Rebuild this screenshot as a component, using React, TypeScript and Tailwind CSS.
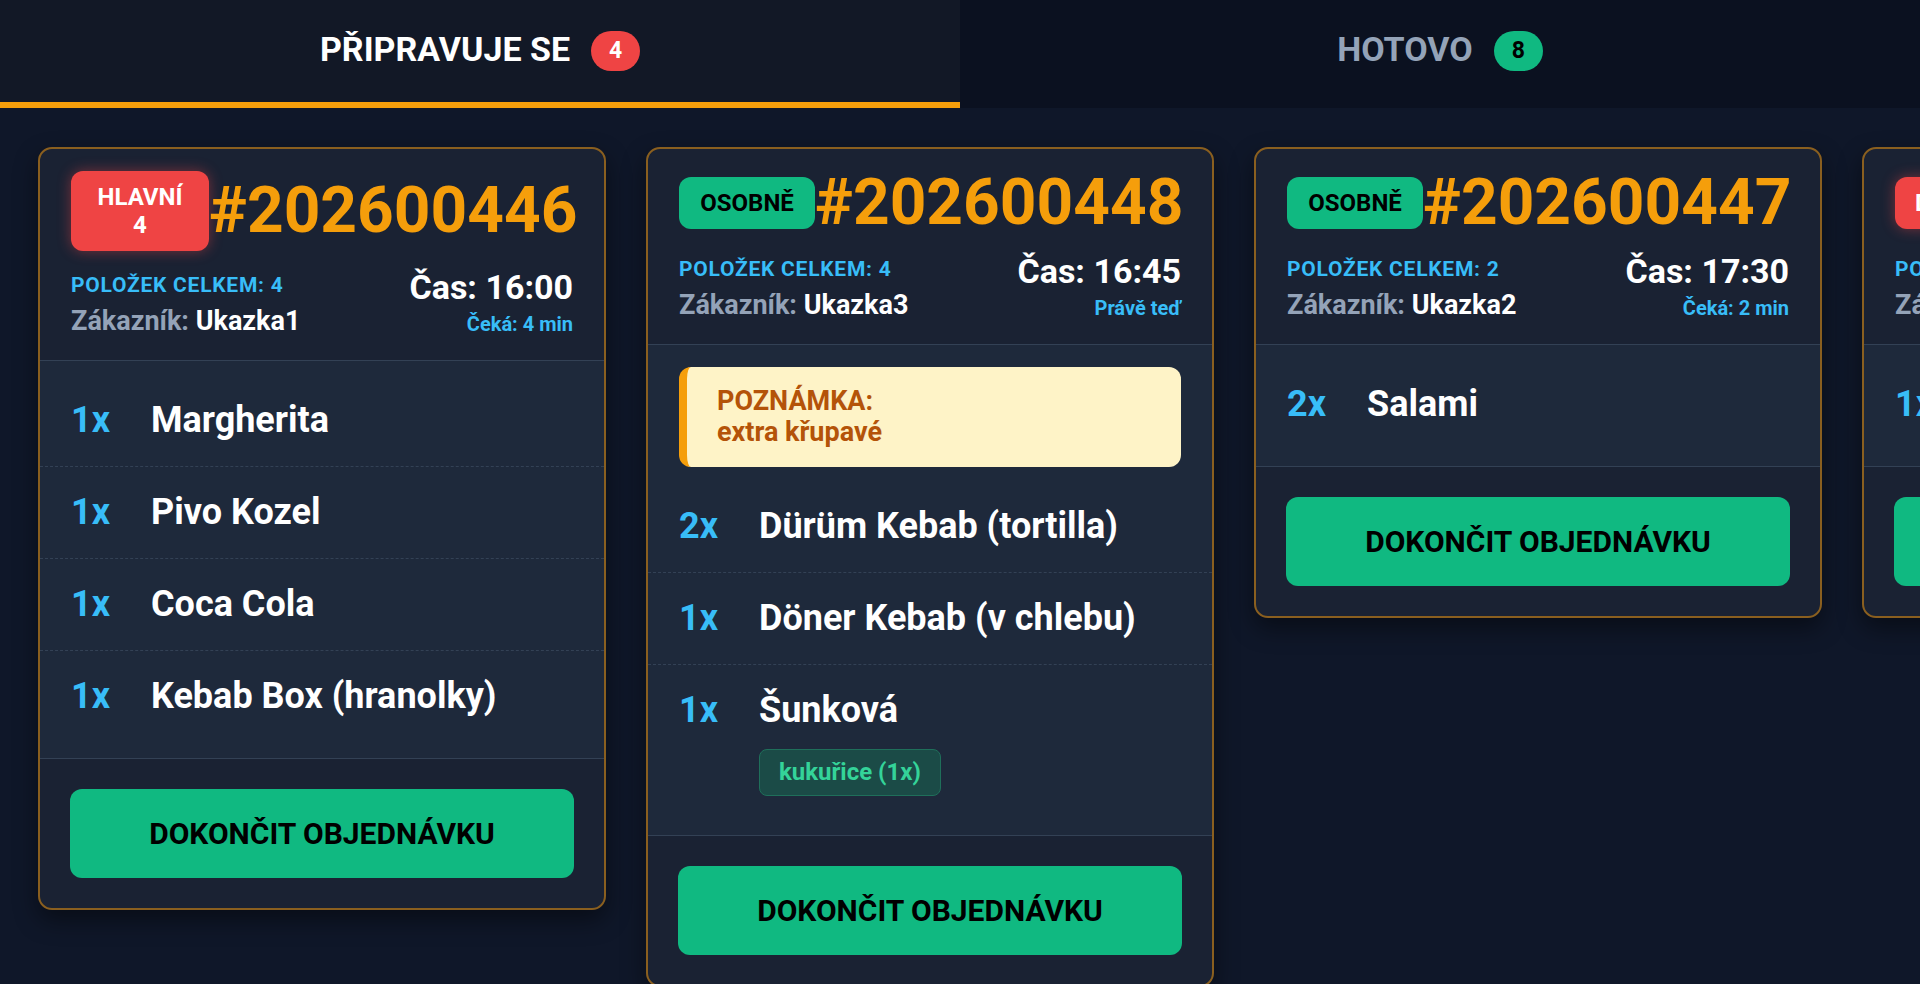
import { useState } from 'react'

type Item = {
  qty: number
  name: string
  extras?: string[]
}

type Order = {
  id: string
  type: string
  typeSub?: string
  tone: 'red' | 'green'
  customer: string
  time: string
  wait: string
  note?: string
  items: Item[]
}

const preparing: Order[] = [
  {
    id: '202600446',
    type: 'HLAVNÍ',
    typeSub: '4',
    tone: 'red',
    customer: 'Ukazka1',
    time: '16:00',
    wait: 'Čeká: 4 min',
    items: [
      { qty: 1, name: 'Margherita' },
      { qty: 1, name: 'Pivo Kozel' },
      { qty: 1, name: 'Coca Cola' },
      { qty: 1, name: 'Kebab Box (hranolky)' },
    ],
  },
  {
    id: '202600448',
    type: 'OSOBNĚ',
    tone: 'green',
    customer: 'Ukazka3',
    time: '16:45',
    wait: 'Právě teď',
    note: 'extra křupavé',
    items: [
      { qty: 2, name: 'Dürüm Kebab (tortilla)' },
      { qty: 1, name: 'Döner Kebab (v chlebu)' },
      { qty: 1, name: 'Šunková', extras: ['kukuřice (1x)'] },
    ],
  },
  {
    id: '202600447',
    type: 'OSOBNĚ',
    tone: 'green',
    customer: 'Ukazka2',
    time: '17:30',
    wait: 'Čeká: 2 min',
    items: [{ qty: 2, name: 'Salami' }],
  },
  {
    id: '202600449',
    type: 'DONÁŠKA',
    tone: 'red',
    customer: 'Ukazka4',
    time: '17:45',
    wait: 'Čeká: 1 min',
    items: [{ qty: 1, name: 'Hawaii' }],
  },
]

function TypeBadge({ order }: { order: Order }) {
  const tone =
    order.tone === 'red'
      ? 'bg-[#ef4444] text-white shadow-[0_0_14px_rgba(239,68,68,0.45)]'
      : 'bg-[#10b981] text-black'
  const width = order.typeSub ? 'w-[138px]' : 'min-w-[136px]'
  return (
    <div
      className={`${width} shrink-0 rounded-xl px-[20px] py-[12px] text-center text-[24px] font-bold leading-[28px] ${tone}`}
    >
      <div>{order.type}</div>
      {order.typeSub && <div>{order.typeSub}</div>}
    </div>
  )
}

function OrderCard({ order }: { order: Order }) {
  const total = order.items.reduce((sum, item) => sum + item.qty, 0)

  return (
    <div className="w-[568px] shrink-0 overflow-hidden rounded-[14px] border-2 border-[#8a5f1f] bg-[#1a2233] shadow-[0_10px_24px_rgba(0,0,0,0.45)]">
      <div className="border-b border-[#334155] px-[31px] pt-[22px] pb-[22px]">
        <div className="flex items-center justify-between">
          <TypeBadge order={order} />
          <div className="text-[64px] font-bold leading-none text-[#f59e0b]">#{order.id}</div>
        </div>
        <div className="mt-[16px] flex items-end justify-between">
          <div>
            <div className="text-[21px] font-bold uppercase leading-[28px] tracking-[0.75px] text-[#38bdf8]">
              Položek celkem: {total}
            </div>
            <div className="mt-[5px] text-[27px] font-bold leading-[34px]">
              <span className="text-[#94a3b8]">Zákazník:</span>{' '}
              <span className="text-white">{order.customer}</span>
            </div>
          </div>
          <div className="text-right">
            <div className="text-[34px] font-bold leading-[40px] text-white">Čas: {order.time}</div>
            <div className="mt-[3px] text-[20px] font-bold leading-[28px] text-[#38bdf8]">{order.wait}</div>
          </div>
        </div>
      </div>

      <div className="bg-[#1e293b] pt-[14px] pb-[16px]">
        {order.note && (
          <div className="px-[31px] pt-[8px] pb-[14px]">
            <div className="rounded-xl border-l-[8px] border-[#f59e0b] bg-[#fef3c7] py-[19px] pl-[30px] text-[27px] font-bold leading-[31px] text-[#b45309]">
              <div>POZNÁMKA:</div>
              <div>{order.note}</div>
            </div>
          </div>
        )}
        {order.items.map((item, i) => (
          <div
            key={i}
            className="flex border-b border-dashed border-[#334155] px-[31px] py-[23px] last:border-b-0"
          >
            <span className="w-[80px] shrink-0 text-[36px] font-bold leading-[45px] text-[#38bdf8]">
              {item.qty}x
            </span>
            <div>
              <div className="text-[36px] font-bold leading-[45px] text-white">{item.name}</div>
              {item.extras && (
                <div className="mt-[16px] flex gap-2">
                  {item.extras.map((extra) => (
                    <span
                      key={extra}
                      className="rounded-lg border border-[#1f6f5a] bg-[#1b4b47] px-[19px] py-[8px] text-[24px] font-bold leading-[29px] text-[#34d399]"
                    >
                      {extra}
                    </span>
                  ))}
                </div>
              )}
            </div>
          </div>
        ))}
      </div>

      <div className="border-t border-[#334155] p-[30px]">
        <button className="w-full rounded-xl bg-[#10b981] py-[26px] text-[30px] font-bold uppercase leading-[37px] text-black">
          Dokončit objednávku
        </button>
      </div>
    </div>
  )
}

export default function App() {
  const [tab, setTab] = useState<'preparing' | 'done'>('preparing')

  const tabs = [
    { key: 'preparing' as const, label: 'PŘIPRAVUJE SE', count: 4, badge: 'bg-[#ef4444] text-white' },
    { key: 'done' as const, label: 'HOTOVO', count: 8, badge: 'bg-[#10b981] text-black' },
  ]

  return (
    <div className="flex h-screen flex-col overflow-hidden bg-[#0f1729] font-['Roboto',sans-serif]">
      <div className="flex shrink-0">
        {tabs.map((t) => {
          const active = tab === t.key
          return (
            <button
              key={t.key}
              onClick={() => setTab(t.key)}
              className={`flex h-[108px] flex-1 items-center justify-center gap-[21px] border-b-[6px] ${
                active
                  ? 'border-[#f59e0b] bg-[#121826] text-white'
                  : 'border-transparent bg-[#0b1120] text-[#94a3b8]'
              }`}
            >
              <span className="pb-[5px] text-[34px] font-bold leading-none">{t.label}</span>
              <span
                className={`flex h-[40px] min-w-[49px] items-center justify-center rounded-full px-[12px] text-[23px] font-bold ${t.badge}`}
              >
                {t.count}
              </span>
            </button>
          )
        })}
      </div>

      <div className="flex flex-1 items-start gap-[40px] overflow-hidden pt-[39px] pl-[38px]">
        {tab === 'preparing' && preparing.map((order) => <OrderCard key={order.id} order={order} />)}
      </div>
    </div>
  )
}
